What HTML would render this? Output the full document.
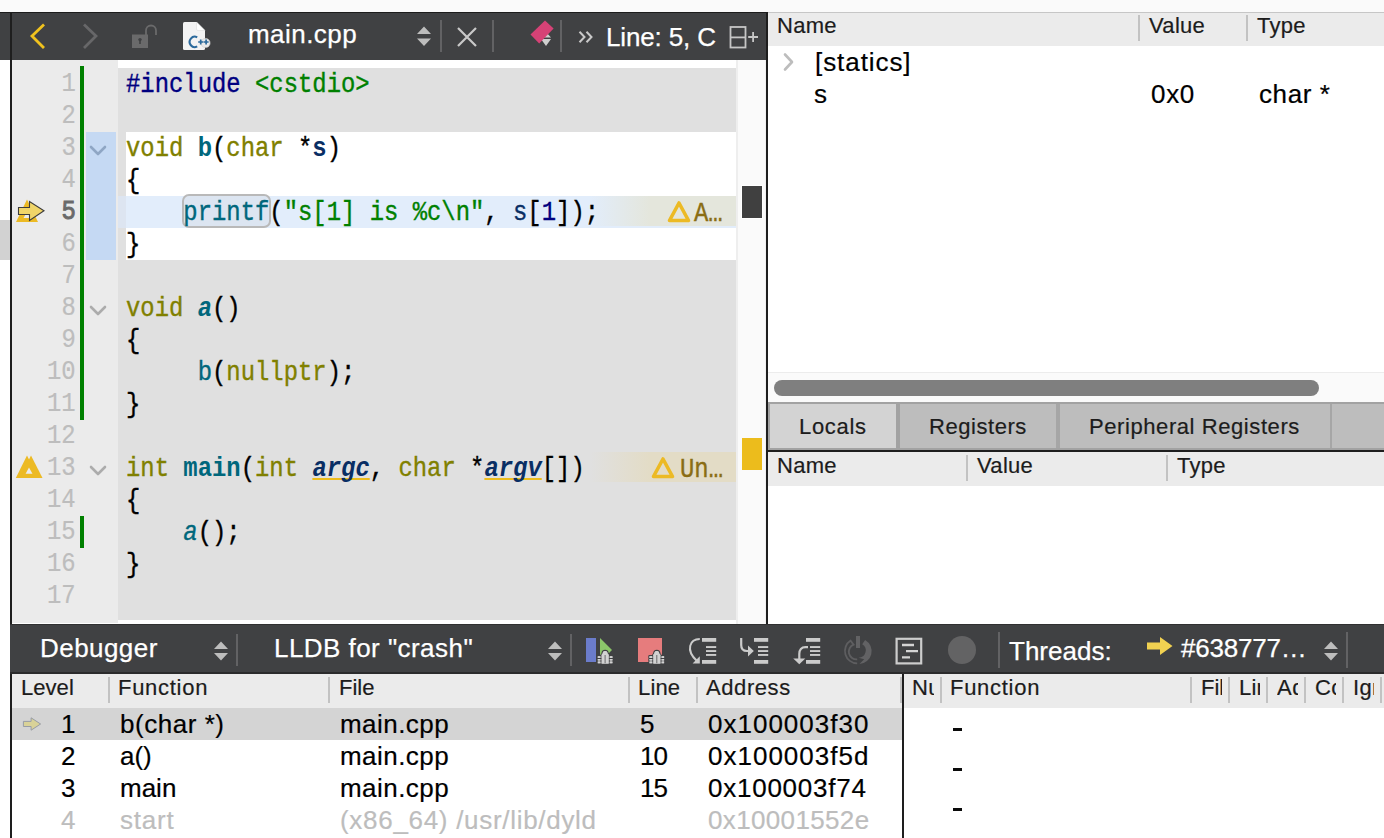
<!DOCTYPE html>
<html>
<head>
<meta charset="utf-8">
<title>Qt Creator Debugger</title>
<style>
html,body{margin:0;padding:0;}
body{width:1384px;height:838px;position:relative;overflow:hidden;background:#ffffff;font-family:"Liberation Sans",sans-serif;color:#1a1a1a;}
.abs{position:absolute;}
#topband{left:0;top:0;width:1384px;height:12px;background:#fafafa;}
#topline{left:768px;top:12px;width:616px;height:1px;background:#c6c6c6;}
/* ---------- editor toolbar ---------- */
#edbar{left:0;top:12px;width:768px;height:48px;background:#404143;border-top:1px solid #1c1c1c;box-sizing:border-box;}
.tbtext{color:#ffffff;font-size:26px;line-height:32px;white-space:nowrap;letter-spacing:0.45px;-webkit-text-stroke:0.25px #ffffff;}
.vsep{width:2px;background:#626264;}
/* ---------- editor ---------- */
#leftline{left:10px;top:12px;width:2px;height:826px;background:#1e1e1e;}
#leftgray{left:0;top:220px;width:10px;height:40px;background:#d2d2d2;}
#gutter{left:12px;top:60px;width:106px;height:563px;background:#ebebeb;}
#codebg{left:118px;top:68px;width:618px;height:552px;background:#e0e0e0;}
#focus{left:126px;top:132px;width:610px;height:128px;background:#ffffff;}
#curline{left:118px;top:196px;width:618px;height:32px;background:#e2edfb;}
#curline2{left:118px;top:196px;width:8px;height:32px;background:#dde5f1;}
#foldcol{left:86px;top:132px;width:30px;height:128px;background:#c5d9f3;}
#vscroll{left:736px;top:60px;width:30px;height:564px;background:#fafafa;border-left:2px solid #eeeeee;border-right:1px solid #f0f0f0;box-sizing:border-box;}
#divider{left:766px;top:12px;width:2px;height:612px;background:#1e1e1e;}
.green{left:80px;width:4px;background:#008000;}
.ln{left:12px;width:64px;height:32px;text-align:right;font-family:"Liberation Mono",monospace;font-size:28px;line-height:32px;color:#bdbdbd;white-space:pre;}
.ln span{display:inline-block;-webkit-text-stroke:0.2px;transform:scaleX(0.853);transform-origin:100% 50%;}
.cl{left:126px;margin-top:0.5px;height:32px;font-family:"Liberation Mono",monospace;font-size:28px;line-height:32px;color:#000000;white-space:pre;transform:scaleX(0.853);transform-origin:0 50%;-webkit-text-stroke:0.4px;}
.kw{color:#808000;}
.fn{color:#00677c;}
.pp{color:#000080;}
.st{color:#008000;}
.lv{color:#092e64;}
.nu{color:#000080;}
.b{font-weight:bold;-webkit-text-stroke:0;}
.i{font-style:italic;}
.wul{text-decoration:underline;text-decoration-color:#ecbc1c;text-decoration-thickness:2px;text-underline-offset:2px;text-decoration-skip-ink:none;}
/* ---------- right panels ---------- */
.hdr{background:#ebebeb;}
.hl{font-size:22px;line-height:26px;color:#1c1c1c;-webkit-text-stroke:0.2px;white-space:nowrap;letter-spacing:0.3px;}
.hsep{width:2px;background:#c2c2c2;}
.row{font-size:26px;line-height:32px;color:#000000;white-space:nowrap;-webkit-text-stroke:0.2px;}
.dim{color:#bdbdbd;}
</style>
</head>
<body>
<div id="topband" class="abs"></div>
<div id="topline" class="abs"></div>

<!-- EDITOR TOOLBAR -->
<div id="edbar" class="abs"></div>
<!-- back / forward -->
<svg class="abs" style="left:24px;top:18px;" width="28" height="36" viewBox="0 0 28 36"><path d="M20 6.5 L8 18 L20 30" fill="none" stroke="#f0c21e" stroke-width="2.8" stroke-linecap="butt" stroke-linejoin="miter"/></svg>
<svg class="abs" style="left:76px;top:18px;" width="28" height="36" viewBox="0 0 28 36"><path d="M8 6.5 L20 18 L8 30" fill="none" stroke="#676769" stroke-width="2.8" stroke-linecap="butt" stroke-linejoin="miter"/></svg>
<!-- lock -->
<svg class="abs" style="left:128px;top:20px;" width="32" height="32" viewBox="0 0 32 32">
  <path d="M18 16 L18 10.5 A5 5 0 0 1 28 10.5 L28 15" fill="none" stroke="#6a6a6b" stroke-width="1.8"/>
  <rect x="4" y="14.5" width="16" height="13.5" fill="#6a6a6b"/>
  <circle cx="12" cy="19.6" r="1.7" fill="#404143"/><rect x="11.2" y="20" width="1.6" height="4" fill="#404143"/>
</svg>
<!-- C++ file icon -->
<svg class="abs" style="left:180px;top:20px;" width="34" height="32" viewBox="0 0 34 32">
  <path d="M4.5 2 L16.5 2 L25 10.5 L25 28.5 Q25 30 23.5 30 L4.5 30 Q3 30 3 28.5 L3 3.5 Q3 2 4.5 2 Z" fill="#f3f3f3"/>
  <path d="M16.5 2 L25 10.5 L18 10.5 Q16.5 10.5 16.5 9 Z" fill="#ffffff" stroke="#dcdcdc" stroke-width="0.6"/>
  <circle cx="25.5" cy="23" r="4.6" fill="#e9e9e9" stroke="#cfcfcf" stroke-width="0.6"/>
  <path d="M17.2 17.4 A5 5.2 0 1 0 17.2 26.4" fill="none" stroke="#2c6a9c" stroke-width="2.1"/>
  <path d="M18.2 22 L23.2 22 M20.7 19.5 L20.7 24.5 M23.6 22 L28.6 22 M26.1 19.5 L26.1 24.5" stroke="#2c6a9c" stroke-width="1.7"/>
</svg>
<div class="abs tbtext" style="left:248px;top:18px;">main.cpp</div>
<svg class="abs" style="left:415px;top:24px;" width="18" height="24" viewBox="0 0 18 24"><path d="M2 10 L9 2.5 L16 10 Z M2 14.5 L9 22 L16 14.5 Z" fill="#bdbdbd"/></svg>
<div class="abs vsep" style="left:440px;top:20px;height:32px;"></div>
<svg class="abs" style="left:455px;top:25px;" width="24" height="24" viewBox="0 0 24 24"><path d="M3 3 L21 21 M21 3 L3 21" stroke="#c9c9c9" stroke-width="2.2"/></svg>
<div class="abs vsep" style="left:492px;top:20px;height:32px;"></div>
<!-- bookmark / marker icon -->
<svg class="abs" style="left:526px;top:16px;" width="32" height="36" viewBox="0 0 32 36">
  <path d="M15 21.5 L20 16 L25 21.5 Z M15 23 L20 30 L25 23 Z" fill="#cfcfcf"/>
  <path d="M19 4.4 L27.6 12.5 L13.2 27.5 L4.5 18.6 Z" fill="#d64276"/>
</svg>
<div class="abs vsep" style="left:560px;top:20px;height:32px;"></div>
<svg class="abs" style="left:576px;top:28px;" width="20" height="18" viewBox="0 0 20 18"><path d="M3.5 3.8 L8.5 9 L3.5 14.2 M10.5 3.8 L15.5 9 L10.5 14.2" fill="none" stroke="#c9c9c9" stroke-width="2"/></svg>
<div class="abs tbtext" style="left:606px;top:20.5px;letter-spacing:-0.15px;">Line: 5, C</div>
<svg class="abs" style="left:728px;top:24px;" width="32" height="26" viewBox="0 0 32 26">
  <rect x="2.5" y="3" width="15" height="20.5" fill="none" stroke="#c6c6c6" stroke-width="1.8"/>
  <path d="M2.5 13.4 L17.5 13.4" stroke="#c6c6c6" stroke-width="1.8"/>
  <path d="M20.2 13 L30 13 M25.1 8 L25.1 18" stroke="#c6c6c6" stroke-width="1.8"/>
</svg>

<!-- EDITOR -->
<div id="gutter" class="abs"></div>
<div id="codebg" class="abs"></div>
<div id="focus" class="abs"></div>
<div id="curline" class="abs"></div>
<div id="curline2" class="abs"></div>
<div id="foldcol" class="abs"></div>
<div id="vscroll" class="abs"></div>
<div id="leftgray" class="abs"></div>
<div id="leftline" class="abs"></div>
<div id="divider" class="abs"></div>

<!-- green change bars -->
<div class="abs green" style="top:66px;height:354px;"></div>
<div class="abs green" style="top:516px;height:32px;"></div>

<!-- line numbers -->
<div class="abs ln" style="top:68px;"><span>1</span></div>
<div class="abs ln" style="top:100px;"><span>2</span></div>
<div class="abs ln" style="top:132px;"><span>3</span></div>
<div class="abs ln" style="top:164px;"><span>4</span></div>
<div class="abs ln" style="top:196px;color:#6a6a6a;"><span style="-webkit-text-stroke:1px #6a6a6a;">5</span></div>
<div class="abs ln" style="top:228px;"><span>6</span></div>
<div class="abs ln" style="top:260px;"><span>7</span></div>
<div class="abs ln" style="top:292px;"><span>8</span></div>
<div class="abs ln" style="top:324px;"><span>9</span></div>
<div class="abs ln" style="top:356px;"><span>10</span></div>
<div class="abs ln" style="top:388px;"><span>11</span></div>
<div class="abs ln" style="top:420px;"><span>12</span></div>
<div class="abs ln" style="top:452px;"><span>13</span></div>
<div class="abs ln" style="top:484px;"><span>14</span></div>
<div class="abs ln" style="top:516px;"><span>15</span></div>
<div class="abs ln" style="top:548px;"><span>16</span></div>
<div class="abs ln" style="top:580px;"><span>17</span></div>

<!-- fold chevrons -->
<svg class="abs" style="left:88px;top:138px;" width="20" height="24" viewBox="0 0 20 24"><path d="M3 9 L10 16 L17 9" fill="none" stroke="#8fa6c4" stroke-width="2.6" stroke-linecap="round" stroke-linejoin="round"/></svg>
<svg class="abs" style="left:88px;top:298px;" width="20" height="24" viewBox="0 0 20 24"><path d="M3 9 L10 16 L17 9" fill="none" stroke="#acacac" stroke-width="2.6" stroke-linecap="round" stroke-linejoin="round"/></svg>
<svg class="abs" style="left:88px;top:458px;" width="20" height="24" viewBox="0 0 20 24"><path d="M3 9 L10 16 L17 9" fill="none" stroke="#acacac" stroke-width="2.6" stroke-linecap="round" stroke-linejoin="round"/></svg>

<!-- gutter icon: line 5 (warning + location arrow) -->
<svg class="abs" style="left:14px;top:196px;" width="36" height="32" viewBox="0 0 36 32">
  <path d="M13 3.5 L24 26 L2 26 Z" fill="#ecba24"/>
  <path d="M13 16 L16.5 22 L9.5 22 Z" fill="#ebebeb"/>
  <path d="M4.5 11.5 L15.5 11.5 L15.5 5.5 L30 14.8 L15.5 24.5 L15.5 18.5 L4.5 18.5 Z" fill="#f0d569" stroke="#3c3c3c" stroke-width="1.1" stroke-linejoin="miter"/>
</svg>
<!-- gutter icon: line 13 (double warning) -->
<svg class="abs" style="left:14px;top:452px;" width="36" height="32" viewBox="0 0 36 32">
  <path d="M13 3.5 L24.5 26 L1.8 26 Z" fill="#ecba24"/>
  <path d="M17 3.5 L28.5 26 L5.8 26 Z" fill="#ecba24"/>
  <path d="M15 15.5 L18.5 21.8 L11.6 21.8 Z" fill="#ebebeb"/>
</svg>

<!-- annotations -->
<div class="abs" style="left:590px;top:196px;width:146px;height:30px;background:linear-gradient(to right,rgba(228,230,220,0) 0,#e4e6dc 60px,#e4e6dc 100%);"></div>
<div class="abs" style="left:590px;top:452px;width:146px;height:30px;background:linear-gradient(to right,rgba(227,220,198,0) 0,#e3dcc6 60px,#e3dcc6 100%);"></div>
<svg class="abs" style="left:666px;top:198px;" width="26" height="26" viewBox="0 0 26 26"><path d="M13 5 L22.5 22.5 L3.5 22.5 Z" fill="none" stroke="#ecba24" stroke-width="3.6" stroke-linejoin="round"/></svg>
<svg class="abs" style="left:650px;top:454px;" width="26" height="26" viewBox="0 0 26 26"><path d="M13 5 L22.5 22.5 L3.5 22.5 Z" fill="none" stroke="#ecba24" stroke-width="3.6" stroke-linejoin="round"/></svg>
<div class="abs cl" style="left:694px;top:197px;color:#8a6d14;">A…</div>
<div class="abs cl" style="left:680px;top:453px;color:#8a6d14;">Un…</div>

<!-- printf highlight box -->
<div class="abs" style="left:182px;top:194px;width:89px;height:34px;box-sizing:border-box;border:2px solid #b9b9b9;border-radius:7px;background:#dce5f1;"></div>

<!-- code -->
<div class="abs cl" style="top:68px;"><span class="pp">#include</span> <span class="st">&lt;cstdio&gt;</span></div>
<div class="abs cl" style="top:132px;"><span class="kw">void</span> <span class="fn b">b</span>(<span class="kw">char</span> *<span class="lv b">s</span>)</div>
<div class="abs cl" style="top:164px;">{</div>
<div class="abs cl" style="top:196px;">    <span class="fn">printf</span>(<span class="st">"s[1] is %c\n"</span>, <span class="lv">s</span>[<span class="nu">1</span>]);</div>
<div class="abs cl" style="top:228px;">}</div>
<div class="abs cl" style="top:292px;"><span class="kw">void</span> <span class="fn b i">a</span>()</div>
<div class="abs cl" style="top:324px;">{</div>
<div class="abs cl" style="top:356px;">     <span class="fn">b</span>(<span class="kw">nullptr</span>);</div>
<div class="abs cl" style="top:388px;">}</div>
<div class="abs cl" style="top:452px;"><span class="kw">int</span> <span class="fn b">main</span>(<span class="kw">int</span> <span class="lv b i wul">argc</span>, <span class="kw">char</span> *<span class="lv b i wul">argv</span>[])</div>
<div class="abs cl" style="top:484px;">{</div>
<div class="abs cl" style="top:516px;">    <span class="fn i">a</span>();</div>
<div class="abs cl" style="top:548px;">}</div>

<!-- scrollbar markers -->
<div class="abs" style="left:741px;top:185px;width:22px;height:34px;background:#ffffff;"></div>
<div class="abs" style="left:742px;top:186px;width:20px;height:32px;background:#404040;"></div>
<div class="abs" style="left:742px;top:438px;width:20px;height:32px;background:#ecbc1c;"></div>


<!-- LOCALS VIEW (top right) -->
<div class="abs hdr" style="left:768px;top:13px;width:616px;height:33px;"></div>
<div class="abs hl" style="left:777px;top:13px;">Name</div>
<div class="abs hsep" style="left:1138px;top:15px;height:26px;"></div>
<div class="abs hl" style="left:1149px;top:13px;">Value</div>
<div class="abs hsep" style="left:1246px;top:15px;height:26px;"></div>
<div class="abs hl" style="left:1257px;top:13px;">Type</div>

<svg class="abs" style="left:780px;top:50px;" width="18" height="24" viewBox="0 0 18 24"><path d="M5 4.5 L12 12 L5 19.5" fill="none" stroke="#bdbdbd" stroke-width="2.6" stroke-linecap="round" stroke-linejoin="round"/></svg>
<div class="abs row" style="left:815px;top:46px;letter-spacing:0.93px;">[statics]</div>
<div class="abs row" style="left:814px;top:78px;">s</div>
<div class="abs row" style="left:1151px;top:78px;letter-spacing:0.7px;">0x0</div>
<div class="abs row" style="left:1259px;top:78px;letter-spacing:0.6px;">char *</div>

<!-- horizontal scrollbar -->
<div class="abs" style="left:768px;top:372px;width:616px;height:30px;background:#fafafa;border-top:1px solid #ececec;box-sizing:border-box;"></div>
<div class="abs" style="left:774px;top:380px;width:545px;height:16px;border-radius:8px;background:#7f7f7f;"></div>

<!-- tab bar -->
<div class="abs" style="left:768px;top:402px;width:616px;height:48px;background:#bdbdbd;border-top:2px solid #a2a2a2;border-bottom:2px solid #a2a2a2;box-sizing:border-box;"></div>
<div class="abs" style="left:768px;top:404px;width:2px;height:44px;background:#a2a2a2;"></div>
<div class="abs" style="left:770px;top:404px;width:126px;height:44px;background:#d3d3d3;"></div>
<div class="abs" style="left:896px;top:404px;width:4px;height:44px;background:#a2a2a2;"></div>
<div class="abs" style="left:1056px;top:404px;width:4px;height:44px;background:#a6a6a6;"></div>
<div class="abs" style="left:1330px;top:404px;width:2px;height:44px;background:#a6a6a6;"></div>
<div class="abs hl" style="left:799px;top:414px;letter-spacing:0.7px;">Locals</div>
<div class="abs hl" style="left:929px;top:414px;letter-spacing:0.55px;">Registers</div>
<div class="abs hl" style="left:1089px;top:414px;letter-spacing:0.58px;">Peripheral Registers</div>
<div class="abs" style="left:768px;top:450px;width:616px;height:2px;background:#1e1e1e;"></div>

<!-- second view header -->
<div class="abs hdr" style="left:768px;top:452px;width:616px;height:34px;"></div>
<div class="abs hl" style="left:777px;top:453px;">Name</div>
<div class="abs hsep" style="left:966px;top:455px;height:26px;"></div>
<div class="abs hl" style="left:977px;top:453px;">Value</div>
<div class="abs hsep" style="left:1166px;top:455px;height:26px;"></div>
<div class="abs hl" style="left:1177px;top:453px;">Type</div>


<!-- DEBUGGER TOOLBAR -->
<div class="abs" style="left:10px;top:624px;width:1374px;height:50px;background:#404143;border-top:1px solid #303031;border-bottom:2px solid #2b2b2c;box-sizing:border-box;"></div>
<div class="abs tbtext" style="left:40px;top:632px;">Debugger</div>
<svg class="abs" style="left:212px;top:639px;" width="18" height="24" viewBox="0 0 18 24"><path d="M2 10 L9 2.5 L16 10 Z M2 14 L9 21.5 L16 14 Z" fill="#bdbdbd"/></svg>
<div class="abs vsep" style="left:236px;top:634px;height:32px;"></div>
<div class="abs tbtext" style="left:274px;top:632px;">LLDB for "crash"</div>
<svg class="abs" style="left:546px;top:639px;" width="18" height="24" viewBox="0 0 18 24"><path d="M2 10 L9 2.5 L16 10 Z M2 14 L9 21.5 L16 14 Z" fill="#bdbdbd"/></svg>
<div class="abs vsep" style="left:570px;top:634px;height:32px;"></div>

<!-- continue -->
<svg class="abs" style="left:584px;top:634px;" width="32" height="32" viewBox="0 0 32 32">
  <rect x="2" y="4" width="10" height="24" fill="#6b7ccb"/>
  <path d="M16 4 L28 16 L16 28 Z" fill="#8bc66a"/>
  <g fill="#d2d2d2" stroke="#404143" stroke-width="2.4" paint-order="stroke" stroke-linejoin="round">
    <path d="M13.8 22.3 H28.4 V23.9 H13.8 Z M13.8 24.9 H28.4 V26.4 H13.8 Z M13.8 27.6 H28.4 V29.2 H13.8 Z"/>
    <path d="M17.6 29.6 V21.4 Q17.6 20.2 18.6 19.8 Q18.6 16.9 21.1 16.9 Q23.6 16.9 23.6 19.8 Q24.7 20.2 24.7 21.4 V29.6 Z"/>
  </g>
  <g fill="#d2d2d2">
    <path d="M13.8 22.3 H28.4 V23.9 H13.8 Z M13.8 24.9 H28.4 V26.4 H13.8 Z M13.8 27.6 H28.4 V29.2 H13.8 Z"/>
    <path d="M17.6 29.6 V21.4 Q17.6 20.2 18.6 19.8 Q18.6 16.9 21.1 16.9 Q23.6 16.9 23.6 19.8 Q24.7 20.2 24.7 21.4 V29.6 Z"/>
  </g>
  <path d="M17 22 V29.6 M25.3 22 V29.6" stroke="#404143" stroke-width="0.7"/>
  <rect x="20.6" y="21" width="1" height="8.2" fill="#6a6a6c"/>
</svg>
<!-- stop -->
<svg class="abs" style="left:636px;top:634px;" width="32" height="32" viewBox="0 0 32 32">
  <rect x="2" y="4" width="24" height="24" fill="#e67c7d"/>
  <g transform="translate(-0.3 0)">
  <g fill="#d2d2d2" stroke="#404143" stroke-width="2.4" paint-order="stroke" stroke-linejoin="round">
    <path d="M13.8 22.3 H28.4 V23.9 H13.8 Z M13.8 24.9 H28.4 V26.4 H13.8 Z M13.8 27.6 H28.4 V29.2 H13.8 Z"/>
    <path d="M17.6 29.6 V21.4 Q17.6 20.2 18.6 19.8 Q18.6 16.9 21.1 16.9 Q23.6 16.9 23.6 19.8 Q24.7 20.2 24.7 21.4 V29.6 Z"/>
  </g>
  <g fill="#d2d2d2">
    <path d="M13.8 22.3 H28.4 V23.9 H13.8 Z M13.8 24.9 H28.4 V26.4 H13.8 Z M13.8 27.6 H28.4 V29.2 H13.8 Z"/>
    <path d="M17.6 29.6 V21.4 Q17.6 20.2 18.6 19.8 Q18.6 16.9 21.1 16.9 Q23.6 16.9 23.6 19.8 Q24.7 20.2 24.7 21.4 V29.6 Z"/>
  </g>
  <path d="M17 22 V29.6 M25.3 22 V29.6" stroke="#404143" stroke-width="0.7"/>
  <rect x="20.6" y="21" width="1" height="8.2" fill="#6a6a6c"/>
  </g>
</svg>
<!-- step over -->
<svg class="abs" style="left:686px;top:634px;" width="32" height="32" viewBox="0 0 32 32">
  <g fill="#cbcbcb"><rect x="16" y="4" width="14.2" height="3.8"/><rect x="20" y="12.1" width="10.2" height="1.9"/><rect x="20" y="16.1" width="10.2" height="1.9"/><rect x="20" y="20" width="10.2" height="1.9"/><rect x="16" y="26" width="14.2" height="3.8"/></g>
  <path d="M13.8 5 C4 5 -1 16 11 27" fill="none" stroke="#cbcbcb" stroke-width="2"/>
  <path d="M6.6 29.6 L13.8 29.6 L13.8 22.2 Z" fill="#cbcbcb"/>
</svg>
<!-- step into -->
<svg class="abs" style="left:738px;top:634px;" width="32" height="32" viewBox="0 0 32 32">
  <g fill="#cbcbcb"><rect x="16" y="4" width="14.2" height="3.8"/><rect x="20" y="12.1" width="10.2" height="1.9"/><rect x="20" y="16.1" width="10.2" height="1.9"/><rect x="20" y="20" width="10.2" height="1.9"/><rect x="16" y="26" width="14.2" height="3.8"/></g>
  <path d="M3.2 4 V11 Q3.2 17 9 17 H11" fill="none" stroke="#cbcbcb" stroke-width="2.2"/>
  <path d="M10 11.6 L15.8 17 L10 22.6 Z" fill="#cbcbcb"/>
</svg>
<!-- step out -->
<svg class="abs" style="left:790px;top:634px;" width="32" height="32" viewBox="0 0 32 32">
  <g fill="#cbcbcb"><rect x="16" y="4" width="14.2" height="3.8"/><rect x="20" y="12.1" width="10.2" height="1.9"/><rect x="20" y="16.1" width="10.2" height="1.9"/><rect x="20" y="20" width="10.2" height="1.9"/><rect x="16" y="26" width="14.2" height="3.8"/></g>
  <path d="M18 13.2 H15.5 Q9.3 13.2 9.3 20 V25.5" fill="none" stroke="#cbcbcb" stroke-width="2.2"/>
  <path d="M3.2 24.6 L15.3 24.6 L9.3 30.2 Z" fill="#cbcbcb"/>
</svg>
<!-- restart (disabled) -->
<svg class="abs" style="left:842px;top:634px;" width="32" height="32" viewBox="0 0 32 32">
  <path d="M23.1 6 A12.9 12.9 0 0 1 17.4 30.1 L22.2 25.2 L16.6 23.7 A7.2 7.2 0 0 0 20.2 10.3 Z" fill="#626264"/>
  <path d="M15.2 29.4 A12.4 12.4 0 0 1 8.6 6.6 L11.6 10.6 A7.7 7.7 0 0 0 15.2 25.4" fill="none" stroke="#5e5e60" stroke-width="1.8" stroke-linejoin="miter"/>
  <rect x="14" y="2" width="4" height="12" fill="#626264"/>
</svg>
<!-- views -->
<svg class="abs" style="left:894px;top:636px;" width="30" height="30" viewBox="0 0 30 30">
  <rect x="2.6" y="2.8" width="24.6" height="24.6" fill="none" stroke="#cdcdcd" stroke-width="2.2"/>
  <path d="M8 9 L20 9 M12 15.2 L24 15.2 M8 21.4 L16 21.4" stroke="#d4d4d4" stroke-width="2.3"/>
</svg>
<!-- record (disabled) -->
<div class="abs" style="left:948px;top:636px;width:28px;height:28px;border-radius:14px;background:#636364;"></div>

<div class="abs vsep" style="left:998px;top:632px;height:36px;"></div>
<div class="abs tbtext" style="left:1009px;top:635px;letter-spacing:0.0px;">Threads:</div>
<svg class="abs" style="left:1144px;top:634px;" width="32" height="24" viewBox="0 0 32 24"><path d="M3 8.5 L16 8.5 L16 3 L28.5 12 L16 21 L16 15.5 L3 15.5 Z" fill="#f1d151"/></svg>
<div class="abs tbtext" style="left:1181px;top:632px;letter-spacing:-0.2px;">#638777…</div>
<svg class="abs" style="left:1322px;top:639px;" width="18" height="24" viewBox="0 0 18 24"><path d="M2 10 L9 2.5 L16 10 Z M2 14 L9 21.5 L16 14 Z" fill="#bdbdbd"/></svg>
<div class="abs vsep" style="left:1346px;top:632px;height:36px;"></div>

<!-- STACK VIEW -->
<div class="abs hdr" style="left:12px;top:674px;width:890px;height:34px;"></div>
<div class="abs hl" style="left:21px;top:675px;letter-spacing:0.05px;">Level</div>
<div class="abs hsep" style="left:108px;top:677px;height:26px;"></div>
<div class="abs hl" style="left:118px;top:675px;letter-spacing:0.72px;">Function</div>
<div class="abs hsep" style="left:328px;top:677px;height:26px;"></div>
<div class="abs hl" style="left:339px;top:675px;letter-spacing:0.0px;">File</div>
<div class="abs hsep" style="left:628px;top:677px;height:26px;"></div>
<div class="abs hl" style="left:638px;top:675px;letter-spacing:0.15px;">Line</div>
<div class="abs hsep" style="left:696px;top:677px;height:26px;"></div>
<div class="abs hl" style="left:706px;top:675px;letter-spacing:0.58px;">Address</div>
<div class="abs hsep" style="left:900px;top:677px;height:26px;"></div>

<div class="abs" style="left:12px;top:708px;width:890px;height:32px;background:#d4d4d4;"></div>
<svg class="abs" style="left:20px;top:712px;" width="24" height="24" viewBox="0 0 24 24"><path d="M3.4 9.4 L11.1 9.4 L11.1 5.8 L20.6 12 L11.1 18.2 L11.1 14.5 L3.4 14.5 Z" fill="#d9d298" stroke="#979ca6" stroke-width="1" stroke-linejoin="round"/></svg>

<div class="abs row" style="left:61px;top:708px;">1</div>
<div class="abs row" style="left:120px;top:708px;letter-spacing:0.53px;">b(char *)</div>
<div class="abs row" style="left:340px;top:708px;letter-spacing:0.45px;">main.cpp</div>
<div class="abs row" style="left:640px;top:708px;">5</div>
<div class="abs row" style="left:708px;top:708px;letter-spacing:1.0px;">0x100003f30</div>

<div class="abs row" style="left:61px;top:740px;">2</div>
<div class="abs row" style="left:120px;top:740px;">a()</div>
<div class="abs row" style="left:340px;top:740px;letter-spacing:0.45px;">main.cpp</div>
<div class="abs row" style="left:640px;top:740px;letter-spacing:-0.9px;">10</div>
<div class="abs row" style="left:708px;top:740px;letter-spacing:1.0px;">0x100003f5d</div>

<div class="abs row" style="left:61px;top:772px;">3</div>
<div class="abs row" style="left:120px;top:772px;">main</div>
<div class="abs row" style="left:340px;top:772px;letter-spacing:0.45px;">main.cpp</div>
<div class="abs row" style="left:640px;top:772px;letter-spacing:-0.9px;">15</div>
<div class="abs row" style="left:708px;top:772px;letter-spacing:0.75px;">0x100003f74</div>

<div class="abs row dim" style="left:61px;top:804px;">4</div>
<div class="abs row dim" style="left:120px;top:804px;letter-spacing:0.8px;">start</div>
<div class="abs row dim" style="left:340px;top:804px;letter-spacing:0.7px;">(x86_64) /usr/lib/dyld</div>
<div class="abs row dim" style="left:708px;top:804px;letter-spacing:0.35px;">0x10001552e</div>

<div class="abs" style="left:902px;top:674px;width:2px;height:164px;background:#1e1e1e;"></div>

<!-- THREADS VIEW -->
<div class="abs hdr" style="left:904px;top:674px;width:480px;height:34px;"></div>
<div class="abs hl" style="left:912px;top:675px;width:22px;overflow:hidden;">Number</div>
<div class="abs hsep" style="left:940px;top:677px;height:26px;"></div>
<div class="abs hl" style="left:950px;top:675px;letter-spacing:0.72px;">Function</div>
<div class="abs hsep" style="left:1190px;top:677px;height:26px;"></div>
<div class="abs hl" style="left:1201px;top:675px;width:21px;overflow:hidden;letter-spacing:0.0px;">File</div>
<div class="abs hsep" style="left:1228px;top:677px;height:26px;"></div>
<div class="abs hl" style="left:1239px;top:675px;width:21px;overflow:hidden;letter-spacing:0.15px;">Line</div>
<div class="abs hsep" style="left:1266px;top:677px;height:26px;"></div>
<div class="abs hl" style="left:1277px;top:675px;width:21px;overflow:hidden;letter-spacing:0.58px;">Address</div>
<div class="abs hsep" style="left:1304px;top:677px;height:26px;"></div>
<div class="abs hl" style="left:1315px;top:675px;width:21px;overflow:hidden;">Core</div>
<div class="abs hsep" style="left:1342px;top:677px;height:26px;"></div>
<div class="abs hl" style="left:1353px;top:675px;width:21px;overflow:hidden;">Ignored</div>
<div class="abs hsep" style="left:1380px;top:677px;height:26px;"></div>

<div class="abs" style="left:953px;top:728px;width:9px;height:3px;background:#0a0a0a;"></div>
<div class="abs" style="left:953px;top:768px;width:9px;height:3px;background:#0a0a0a;"></div>
<div class="abs" style="left:953px;top:808px;width:9px;height:3px;background:#0a0a0a;"></div>


</body>
</html>
